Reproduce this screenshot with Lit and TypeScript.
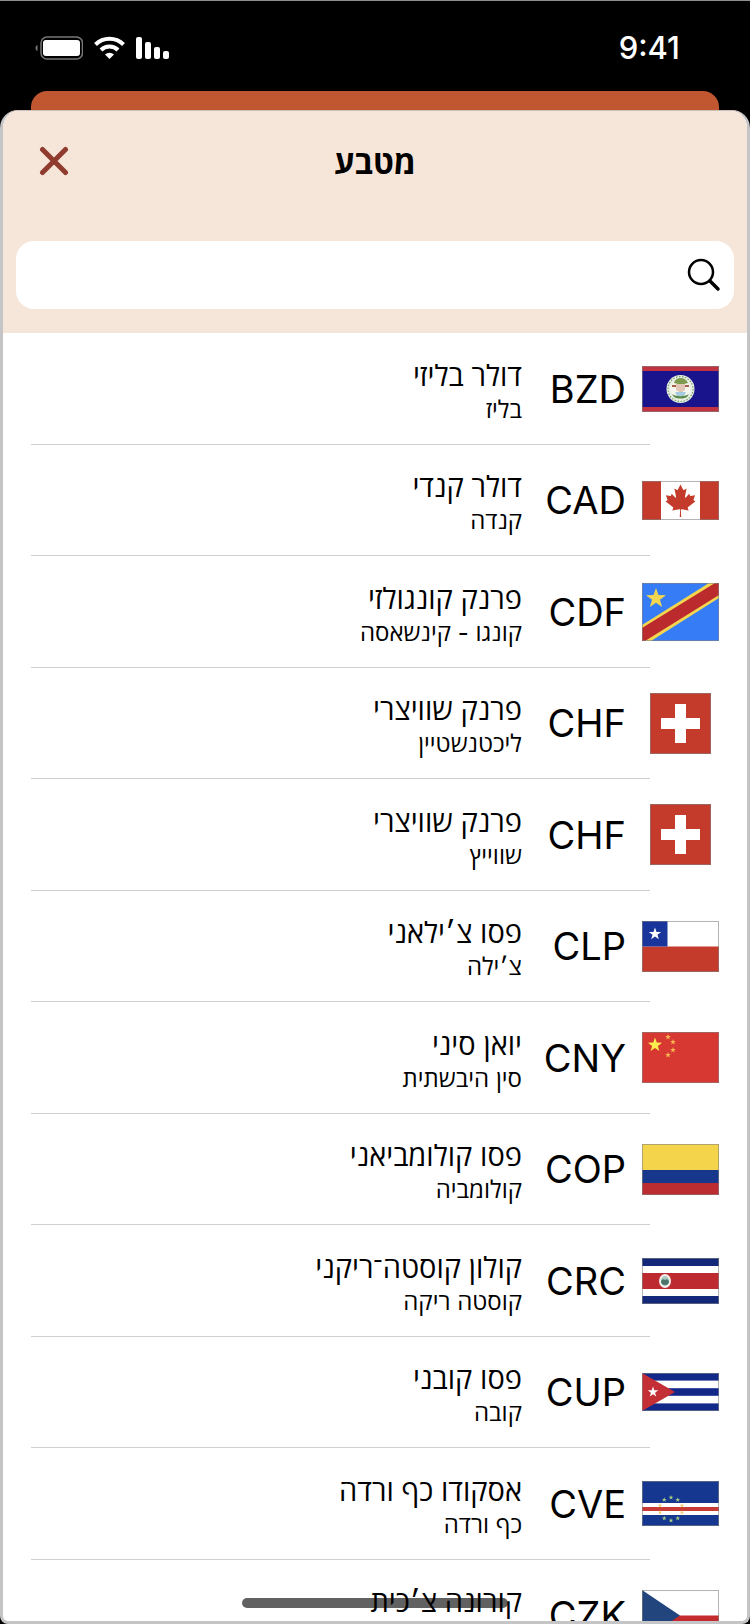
import { LitElement, html, svg, css, SVGTemplateResult } from "lit";
import { customElement, state } from "lit/decorators.js";

interface Currency {
  code: string;
  name: string;
  country: string;
  flag: string;
}

interface Flag {
  width: number;
  height: number;
  art: SVGTemplateResult;
}

// five-pointed star, point up
const star = (cx: number, cy: number, r: number, fill: string) => {
  const points = Array.from({ length: 10 }, (_, i) => {
    const radius = i % 2 ? r * 0.4 : r;
    const angle = (Math.PI / 5) * i - Math.PI / 2;
    return `${(cx + radius * Math.cos(angle)).toFixed(2)},${(cy + radius * Math.sin(angle)).toFixed(2)}`;
  }).join(" ");
  return svg`<polygon points=${points} fill=${fill} />`;
};

const FLAGS: Record<string, Flag> = {
  bz: {
    width: 77,
    height: 46,
    art: svg`
      <rect width="77" height="46" fill="#1a148c" />
      <rect width="77" height="5" fill="#c03340" />
      <rect y="41" width="77" height="5" fill="#c03340" />
      <circle cx="38.500" cy="23" r="14" fill="#e9efe4" />
      <circle cx="38.500" cy="23" r="12.500" fill="none" stroke="#6f9f63" stroke-width="1.200" stroke-dasharray="1.500 1.500" />
      <circle cx="38.500" cy="23" r="10" fill="#f6f5ee" />
      <path d="M32 17c1-4 4-5 7-5s6 2 7 5l-4 1h-6z" fill="#7d9c50" />
      <path d="M30 19h5v2h-5zM42 19h5v2h-5z" fill="#a2604a" />
      <path d="M34 18h9v6l-4.500 3-4.500-3z" fill="#e2c7b6" />
      <path d="M33 26h11l-2 4h-7z" fill="#a5cbe0" />
      <path d="M30 28c5 3 12 3 17 0l-2 3c-4 2-9 2-13 0z" fill="#5a8a4a" />
    `,
  },
  ca: {
    width: 77,
    height: 39,
    art: svg`
      <rect width="77" height="39" fill="#fff" />
      <rect width="19" height="39" fill="#c43a2b" />
      <rect x="58" width="19" height="39" fill="#c43a2b" />
      <path
        transform="translate(-.3 .3) scale(.00808)"
        fill="#c43a2b"
        d="M4890 4430l-45-863a95 95 0 0 1 111-98l859 151-116-320a65 65 0 0 1 20-73l941-762-212-99a65 65 0 0 1-34-79l186-572-542 115a65 65 0 0 1-73-38l-105-247-423 454a65 65 0 0 1-111-57l204-1052-327 189a65 65 0 0 1-91-27l-332-652-332 652a65 65 0 0 1-91 27l-327-189 204 1052a65 65 0 0 1-111 57l-423-454-105 247a65 65 0 0 1-73 38l-542-115 186 572a65 65 0 0 1-34 79l-212 99 941 762a65 65 0 0 1 20 73l-116 320 859-151a95 95 0 0 1 111 98l-45 863z"
      />
    `,
  },
  cd: {
    width: 77,
    height: 58,
    art: svg`
      <rect width="77" height="58" fill="#367cf6" />
      <path d="M0 42 67 0H77V15L9 58H0z" fill="#f3d550" />
      <path d="M0 45 73 0H77V12L3 58H0z" fill="#bb2a2c" />
      ${star(14, 15.500, 10.500, "#f3d550")}
    `,
  },
  ch: {
    width: 61,
    height: 61,
    art: svg`
      <rect width="61" height="61" fill="#c43a2b" />
      <path d="M25 11h11v14h14v11h-14v14h-11v-14h-14v-11h14z" fill="#fff" />
    `,
  },
  cl: {
    width: 77,
    height: 51,
    art: svg`
      <rect width="77" height="51" fill="#fff" />
      <rect y="25.500" width="77" height="25.500" fill="#c43a2b" />
      <rect width="25.500" height="25.500" fill="#19359c" />
      ${star(13, 13, 6.500, "#fff")}
    `,
  },
  cn: {
    width: 77,
    height: 51,
    art: svg`
      <rect width="77" height="51" fill="#d83832" />
      ${star(13, 13, 7.500, "#fbee4e")}
      ${star(26, 5, 3, "#f9b850")}
      ${star(31, 10, 3, "#f9b850")}
      ${star(31, 18, 3, "#f9b850")}
      ${star(26, 23, 3, "#f9b850")}
    `,
  },
  co: {
    width: 77,
    height: 51,
    art: svg`
      <rect width="77" height="26" fill="#f4d44a" />
      <rect y="26" width="77" height="13" fill="#17378d" />
      <rect y="39" width="77" height="12" fill="#bb2d30" />
    `,
  },
  cr: {
    width: 77,
    height: 46,
    art: svg`
      <rect width="77" height="46" fill="#fff" />
      <rect width="77" height="8" fill="#14287a" />
      <rect y="38" width="77" height="8" fill="#14287a" />
      <rect y="15" width="77" height="16" fill="#bd2a30" />
      <ellipse cx="23" cy="23" rx="6" ry="7" fill="#f4efec" />
      <ellipse cx="23" cy="23" rx="4" ry="5" fill="#a9c9c2" />
      <path d="M19 23l2-2 2 1 2-1 2 2c0 3-2 4-4 4s-4-1-4-4z" fill="#4c7468" />
    `,
  },
  cu: {
    width: 77,
    height: 38,
    art: svg`
      <rect width="77" height="38" fill="#12298a" />
      <rect y="7.600" width="77" height="7.600" fill="#fff" />
      <rect y="22.800" width="77" height="7.600" fill="#fff" />
      <path d="M0 0 33 19 0 38z" fill="#c42f36" />
      ${star(11, 19, 5.500, "#fff")}
    `,
  },
  cv: {
    width: 77,
    height: 45,
    art: svg`
      <rect width="77" height="45" fill="#16378f" />
      <rect y="22" width="77" height="12" fill="#fff" />
      <rect y="26" width="77" height="4" fill="#c63b34" />
      ${Array.from({ length: 10 }, (_, i) => {
        const angle = (Math.PI / 5) * i - Math.PI / 2;
        const onStripe = Math.abs(Math.sin(angle)) < 0.5;
        return star(29 + 11.5 * Math.cos(angle), 28 + 11.5 * Math.sin(angle), 2.5, onStripe ? "#f3cf7c" : "#a9cf83");
      })}
    `,
  },
  cz: {
    width: 77,
    height: 51,
    art: svg`
      <rect width="77" height="51" fill="#fff" />
      <rect y="25.500" width="77" height="25.500" fill="#c42b2c" />
      <path d="M0 0 38 25.500 0 51z" fill="#23457d" />
    `,
  },
};

const CURRENCIES: Currency[] = [
  { code: "BZD", name: "דולר בליזי", country: "בליז", flag: "bz" },
  { code: "CAD", name: "דולר קנדי", country: "קנדה", flag: "ca" },
  { code: "CDF", name: "פרנק קונגולזי", country: "קונגו - קינשאסה", flag: "cd" },
  { code: "CHF", name: "פרנק שוויצרי", country: "ליכטנשטיין", flag: "ch" },
  { code: "CHF", name: "פרנק שוויצרי", country: "שווייץ", flag: "ch" },
  { code: "CLP", name: "פסו צ׳ילאני", country: "צ׳ילה", flag: "cl" },
  { code: "CNY", name: "יואן סיני", country: "סין היבשתית", flag: "cn" },
  { code: "COP", name: "פסו קולומביאני", country: "קולומביה", flag: "co" },
  { code: "CRC", name: "קולון קוסטה־ריקני", country: "קוסטה ריקה", flag: "cr" },
  { code: "CUP", name: "פסו קובני", country: "קובה", flag: "cu" },
  { code: "CVE", name: "אסקודו כף ורדה", country: "כף ורדה", flag: "cv" },
  { code: "CZK", name: "קורונה צ׳כית", country: "צ׳כיה", flag: "cz" },
];

@customElement("status-bar")
export class StatusBar extends LitElement {
  static styles = css`
    :host {
      display: flex;
      align-items: center;
      justify-content: space-between;
      height: 91px;
      padding: 4px 70px 0 35px;
      box-sizing: border-box;
      border-top: 1px solid #8e8e8e;
      color: #fff;
    }
    .time {
      font-size: 31px;
      font-weight: 500;
      line-height: 36px;
    }
    .icons {
      display: flex;
      align-items: center;
      gap: 11px;
    }
    svg {
      display: block;
    }
  `;

  render() {
    return html`
      <span class="time">9:41</span>
      <div class="icons">
        <svg width="33" height="24" viewBox="0 0 33 24" fill="#fff">
          <rect y="1" width="6" height="22" rx="2" />
          <rect x="9" y="6" width="6" height="17" rx="2" />
          <rect x="18" y="11" width="6" height="12" rx="2" />
          <rect x="27" y="15" width="6" height="8" rx="2" />
        </svg>
        <svg width="31" height="24" viewBox="0 0 31 24" fill="none" stroke="#fff" stroke-width="4">
          <path d="M1.500 8.500a20 20 0 0 1 28 0" />
          <path d="M7 14a12 12 0 0 1 17 0" />
          <path d="M15.500 23l-4.500-4.500a6.500 6.500 0 0 1 9 0z" fill="#fff" stroke="none" />
        </svg>
        <svg width="48" height="24" viewBox="0 0 48 24">
          <path d="M2.500 9v6C1 14.500.5 13.500.5 12s.5-2.500 2-3z" fill="#777" />
          <rect x="6" y="1" width="41.500" height="22" rx="6" fill="none" stroke="#777" stroke-width="1.500" />
          <rect x="8" y="4" width="37" height="16" rx="3" fill="#fff" />
        </svg>
      </div>
    `;
  }
}

@customElement("currency-row")
export class CurrencyRow extends LitElement {
  static properties = {
    currency: { attribute: false },
  };

  declare currency: Currency;

  static styles = css`
    :host {
      display: block;
      height: 100%;
    }
    button {
      display: grid;
      grid-template-columns: 77px 88px 1fr;
      grid-template-rows: 1fr 1px;
      column-gap: 16px;
      align-items: center;
      width: 100%;
      height: 100%;
      padding: 0 28px;
      border: none;
      background: none;
      color: #000;
      font: inherit;
      text-align: start;
      cursor: pointer;
    }
    button::after {
      content: "";
      grid-column: 1 / -1;
      height: 1px;
      margin-inline-start: 69px;
      background-color: #cfcfcf;
    }
    svg {
      display: block;
      justify-self: center;
      outline: 1px solid rgba(130, 130, 130, 0.6);
      outline-offset: -1px;
    }
    .code {
      font-size: 38px;
      line-height: 48px;
    }
    .labels {
      display: flex;
      flex-direction: column;
      padding-top: 6px;
    }
    .name {
      font-size: 29px;
      font-weight: 500;
      line-height: 36px;
    }
    .country {
      font-size: 24px;
      line-height: 32px;
    }
  `;

  render() {
    const { code, name, country, flag } = this.currency;
    const { width, height, art } = FLAGS[flag];
    return html`
      <button type="button">
        <svg width=${width} height=${height} viewBox="0 0 ${width} ${height}">${art}</svg>
        <span class="code">${code}</span>
        <span class="labels">
          <span class="name">${name}</span>
          <span class="country">${country}</span>
        </span>
      </button>
    `;
  }
}

@customElement("app-root")
export class AppRoot extends LitElement {
  static styles = css`
    :host {
      display: flex;
      flex-direction: column;
      position: relative;
      height: 100vh;
      overflow: hidden;
      background-color: #000;
      font-family: Inter, "Open Sans", "Liberation Sans", sans-serif;
    }
    .previous {
      height: 19px;
      margin: 0 31px;
      border-radius: 16px 16px 0 0;
      background-color: #c15730;
    }
    .sheet {
      flex: 1;
      display: flex;
      flex-direction: column;
      min-height: 0;
      overflow: hidden;
      border: 3px solid #c5c5c7;
      border-top: 1px solid #cdbfb8;
      border-radius: 18px 18px 8px 8px;
      background-color: #fff;
    }
    header {
      background-color: #f6e5d9;
      padding: 0 13px 24px;
    }
    .title-bar {
      display: grid;
      grid-template-columns: 1fr auto 1fr;
      align-items: center;
      height: 100px;
      padding: 0 17px;
      margin-bottom: 30px;
    }
    h1 {
      grid-column: 2;
      margin: 0;
      padding-top: 4px;
      font-size: 32px;
      font-weight: 700;
      line-height: 36px;
    }
    .close {
      justify-self: end;
      padding: 6px;
      border: none;
      background: none;
      cursor: pointer;
    }
    svg {
      display: block;
    }
    .search {
      display: flex;
      align-items: center;
      height: 68px;
      padding: 0 13px;
      border-radius: 18px;
      background-color: #fff;
    }
    .search input {
      flex: 1;
      min-width: 0;
      height: 48px;
      margin-inline-start: 12px;
      border: none;
      outline: none;
      background: none;
      font: inherit;
      font-size: 28px;
    }
    ul {
      flex: 1;
      min-height: 0;
      overflow: hidden;
      margin: 0;
      padding: 0;
      list-style: none;
    }
    li {
      height: 112px;
    }
    li:nth-child(even) {
      height: 111px;
    }
    .home-indicator {
      position: absolute;
      bottom: 16px;
      left: 50%;
      width: 266px;
      height: 10px;
      margin-left: -133px;
      border-radius: 5px;
      background-color: rgba(0, 0, 0, 0.62);
    }
  `;

  @state() private query = "";

  private onInput(e: Event) {
    this.query = (e.target as HTMLInputElement).value.trim();
  }

  render() {
    const visible = CURRENCIES.filter((c) =>
      `${c.code} ${c.name} ${c.country}`.toLowerCase().includes(this.query.toLowerCase())
    );
    return html`
      <status-bar dir="rtl"></status-bar>
      <div class="previous"></div>
      <main class="sheet" dir="rtl" lang="he">
        <header>
          <div class="title-bar">
            <h1>מטבע</h1>
            <button class="close" type="button" aria-label="סגירה">
              <svg width="30" height="30" viewBox="0 0 30 30" stroke="#8f3b2e" stroke-width="5" stroke-linecap="round">
                <path d="M3.500 3.500l23 23M26.500 3.500l-23 23" />
              </svg>
            </button>
          </div>
          <div class="search">
            <label for="query" aria-label="חיפוש">
              <svg width="34" height="34" viewBox="0 0 34 34" fill="none" stroke="#000" stroke-linecap="round">
                <circle cx="14" cy="14" r="12" stroke-width="2.500" />
                <path d="M23 23l8 8" stroke-width="3.500" />
              </svg>
            </label>
            <input id="query" type="text" aria-label="חיפוש" @input=${this.onInput} />
          </div>
        </header>
        <ul>
          ${visible.map((c) => html`<li><currency-row .currency=${c}></currency-row></li>`)}
        </ul>
      </main>
      <div class="home-indicator"></div>
    `;
  }
}
